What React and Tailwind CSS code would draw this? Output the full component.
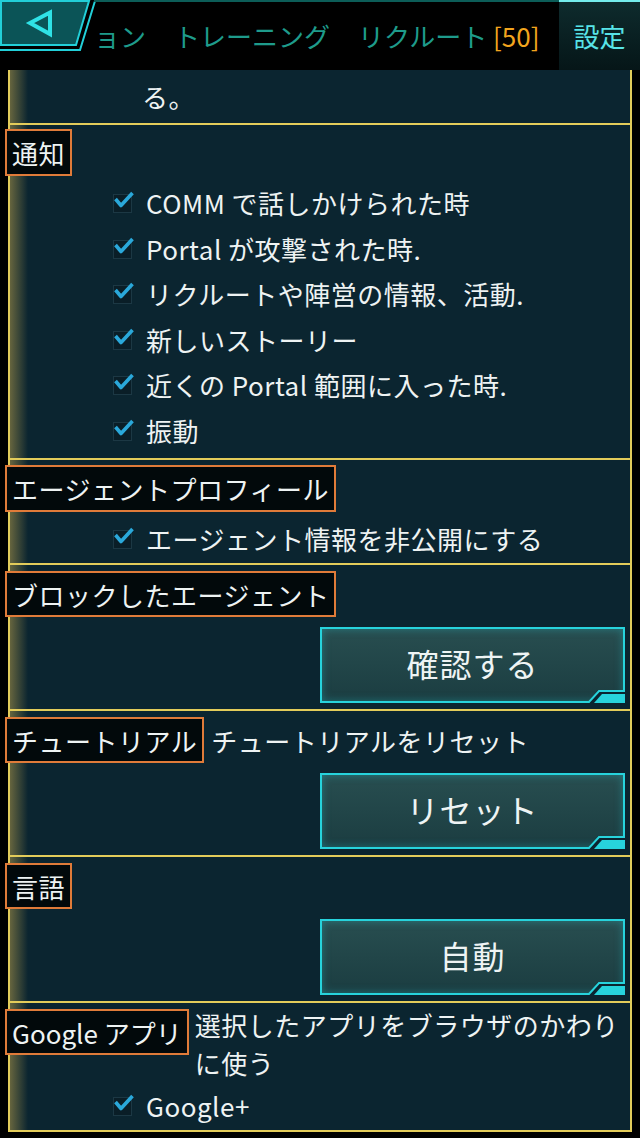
import React from "react";

const YEL = "border-[#e3cc5a]";

function Check() {
  return (
    <svg width="22" height="23" viewBox="0 0 22 23" className="shrink-0">
      <rect x="1.5" y="3.5" width="18" height="18" fill="#0a1e27" stroke="#1c3844" strokeWidth="1" />
      <path d="M3.5 8 L9 14.5 L20.5 2" stroke="#2aa8da" strokeWidth="3.6" fill="none" strokeLinejoin="round" />
    </svg>
  );
}

function CheckRow({ children, h = "h-[45.5px]" }) {
  return (
    <div className={`flex items-center ${h} pl-[102px]`}>
      <Check />
      <span className="ml-[12px] whitespace-nowrap">{children}</span>
    </div>
  );
}

function Label({ children, h = "h-[46px]", extra = "" }) {
  return (
    <div className={`-ml-[5px] shrink-0 ${h} flex items-center border-2 border-[#e07b39] bg-[#02090b] px-[5px] whitespace-nowrap ${extra}`}>
      {children}
    </div>
  );
}

function Btn({ children }) {
  return (
    <div className="mt-[10px] flex justify-end pr-[5px]">
      <div className="relative w-[305px] h-[76px] border-2 border-[#27d3dc] bg-gradient-to-b from-[#284e50] to-[#1b3d41] shadow-[inset_0_0_8px_rgba(40,210,220,0.35)] flex items-center justify-center text-[32px] tracking-[1px] text-[#eef4f4] pb-[4px]">
        {children}
        <svg className="absolute right-[-2px] bottom-[-2px]" width="40" height="16" viewBox="0 0 40 16">
          <polygon points="3,16 13,3 40,3 40,16" fill="#0b2530" />
          <path d="M0 15 L4 15 L14 4 L39 4 L39 2" stroke="#27d3dc" strokeWidth="2" fill="none" />
          <polygon points="9,16 17,7 40,7 40,16" fill="#27d3dc" />
        </svg>
      </div>
    </div>
  );
}

export default function App() {
  return (
    <div className="w-[640px] h-[1138px] bg-black overflow-hidden font-['Noto_Sans_CJK_JP','Noto_Sans',sans-serif] text-[#eef3f3]">
      {/* top bar */}
      <div className="flex h-[70px] bg-black">
        <svg width="97" height="52" viewBox="0 0 97 52" className="shrink-0">
          <polygon points="1,1 89,1 76,45 1,45" fill="#0b5457" stroke="#22cfd8" strokeWidth="2" />
          <path d="M0 50 L80 50 L95 1" stroke="#22cfd8" strokeWidth="2" fill="none" />
          <polygon points="30,23 50,12.5 50,34" fill="none" stroke="#2fe2e6" strokeWidth="4" strokeLinejoin="miter" />
        </svg>
        <div className="flex-1 min-w-0 -ml-[3px] overflow-hidden whitespace-nowrap flex items-center gap-[28px] text-[26px] text-[#1e9b8b] border-t-2 border-[#0c5d58] pb-[1px]">
          <span>ョン</span>
          <span>トレーニング</span>
          <span>
            リクルート <span className="text-[#f2a51e]">[50]</span>
          </span>
        </div>
        <div className="w-[81px] shrink-0 border-t-2 border-[#74ecec] bg-gradient-to-b from-[#0e2b2d] to-[#061618] flex items-center justify-center text-[26px] text-[#58e4e8] pb-[1px]">
          設定
        </div>
      </div>

      {/* panel */}
      <div className={`mx-[8px] border-l-2 border-r-2 ${YEL} border-b-2 bg-[#0b2530] bg-[linear-gradient(90deg,#66653e_0px,#0b2530_18px)] text-[26px] tracking-[0.5px]`}>
        <div className="h-[53px] flex items-center pl-[132px]">る。</div>

        {/* 通知 */}
        <div className={`border-t-2 ${YEL} pb-[5px]`}>
          <div className="flex mt-[4px]">
            <Label h="h-[47px]">通知</Label>
          </div>
          <div className="mt-[4px]">
            <CheckRow>COMM で話しかけられた時</CheckRow>
            <CheckRow>Portal が攻撃された時.</CheckRow>
            <CheckRow>リクルートや陣営の情報、活動.</CheckRow>
            <CheckRow>新しいストーリー</CheckRow>
            <CheckRow>近くの Portal 範囲に入った時.</CheckRow>
            <CheckRow>振動</CheckRow>
          </div>
        </div>

        {/* プロフィール */}
        <div className={`border-t-2 ${YEL} pb-[2px]`}>
          <div className="flex mt-[5px]">
            <Label h="h-[47px]">エージェントプロフィール</Label>
          </div>
          <div className="mt-[3px]">
            <CheckRow h="h-[46px]">エージェント情報を非公開にする</CheckRow>
          </div>
        </div>

        {/* ブロック */}
        <div className={`border-t-2 ${YEL} pb-[6px]`}>
          <div className="flex mt-[6px]">
            <Label>ブロックしたエージェント</Label>
          </div>
          <Btn>確認する</Btn>
        </div>

        {/* チュートリアル */}
        <div className={`border-t-2 ${YEL} pb-[6px]`}>
          <div className="flex items-center mt-[6px]">
            <Label>チュートリアル</Label>
            <span className="ml-[7px] whitespace-nowrap">チュートリアルをリセット</span>
          </div>
          <Btn>リセット</Btn>
        </div>

        {/* 言語 */}
        <div className={`border-t-2 ${YEL} pb-[6px]`}>
          <div className="flex mt-[6px]">
            <Label>言語</Label>
          </div>
          <Btn>自動</Btn>
        </div>

        {/* Google */}
        <div className={`border-t-2 ${YEL} pb-[2px]`}>
          <div className="flex items-start mt-[6px]">
            <Label extra="tracking-normal">Google アプリ</Label>
            <p className="ml-[6px] -mt-[3px] leading-[38px] pr-[4px]">選択したアプリをブラウザのかわりに使う</p>
          </div>
          <CheckRow h="h-[46px]">Google+</CheckRow>
        </div>
      </div>
    </div>
  );
}
